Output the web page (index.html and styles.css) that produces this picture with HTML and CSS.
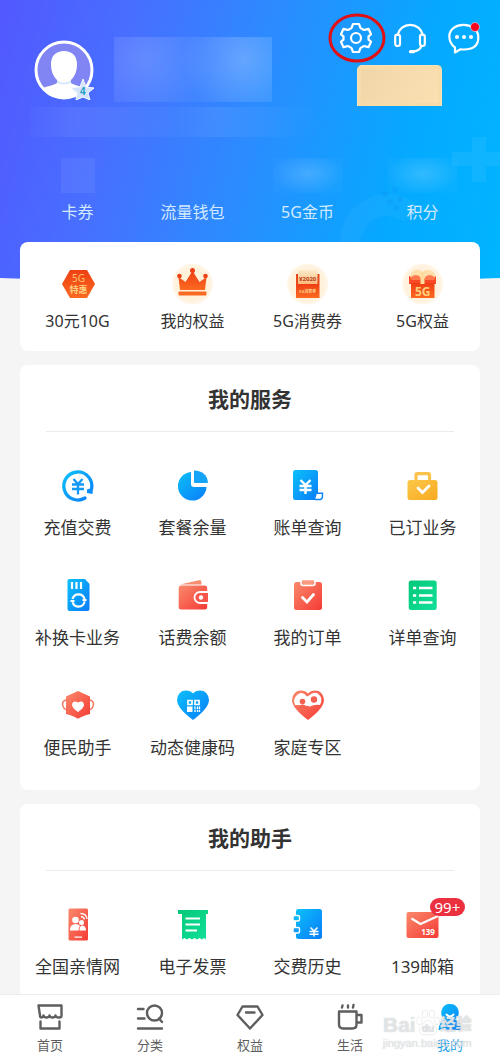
FILE: index.html
```html
<!DOCTYPE html>
<html lang="zh-CN">
<head>
<meta charset="utf-8">
<meta name="viewport" content="width=device-width, initial-scale=1">
<title>我的</title>
<link rel="stylesheet" href="styles.css">
</head>
<body>
<svg class="defs" aria-hidden="true">
  <defs>
    <linearGradient id="blue" x1="0" y1="0" x2="1" y2="1"><stop offset="0" stop-color="#0cc0fa"/><stop offset="1" stop-color="#0a7cf8"/></linearGradient>
    <linearGradient id="red" x1="0" y1="0" x2="1" y2="1"><stop offset="0" stop-color="#f98a6c"/><stop offset="1" stop-color="#f53a35"/></linearGradient>
    <linearGradient id="green" x1="0" y1="0" x2="1" y2="1"><stop offset="0" stop-color="#04c878"/><stop offset="1" stop-color="#12e09a"/></linearGradient>
    <linearGradient id="gold" x1="0" y1="0" x2="1" y2="1"><stop offset="0" stop-color="#fbc84a"/><stop offset="1" stop-color="#f9a91f"/></linearGradient>
    <linearGradient id="orange" x1="0" y1="0" x2="0" y2="1"><stop offset="0" stop-color="#ee3f14"/><stop offset="1" stop-color="#fb6a20"/></linearGradient>
    <linearGradient id="cream" x1="0" y1="0" x2="0" y2="1"><stop offset="0" stop-color="#fdeccb"/><stop offset="1" stop-color="#fbb878"/></linearGradient>
    <radialGradient id="halo"><stop offset="0.7" stop-color="#fff1da"/><stop offset="0.9" stop-color="#fff4e2"/><stop offset="1" stop-color="#fff8ec"/></radialGradient>
  </defs>
</svg>
<main class="page">
  <header class="hero">
    <svg class="hero-art" viewBox="0 0 170 110" aria-hidden="true">
      <path d="M122 20h20V5h14v15h14v14h-14v16h-14V34h-20z" fill="#fff" opacity=".06"/>
      <path d="M10 110a48 48 0 0 1 48-48q18 0 30 12l-14 16q-8-6-18-6-20 0-26 26z" fill="#fff" opacity=".04"/>
      <g fill="#0873e8" opacity=".12"><circle cx="55" cy="62" r="3"/><circle cx="65" cy="58" r="3"/><circle cx="60" cy="70" r="3"/><circle cx="70" cy="67" r="3"/><circle cx="66" cy="76" r="3"/></g>
    </svg>
    <div class="profile">
      <button class="avatar" aria-label="头像">
        <svg viewBox="0 0 60 60">
          <defs><clipPath id="face"><circle cx="30" cy="30" r="28"/></clipPath></defs>
          <circle cx="30" cy="30" r="28" fill="#8085f3"/>
          <g clip-path="url(#face)" fill="#fff"><path d="M17 24c0-8 5-13 13-13s13 5 13 13c0 7-2 12-6 16v3c4 3 12 3 18 7v12H5V50c6-4 14-4 18-7v-3c-4-4-6-9-6-16z"/></g>
          <path d="M23 40q7 5 14 0v3q-7 3-14 0z" fill="#dce9fb"/>
          <circle cx="30" cy="30" r="28" fill="none" stroke="#fff" stroke-width="3"/>
          <path d="M49 39l3 8 8 1-6 5 2 7-7-3-7 3 1-7-6-5 9-1z" fill="#d5e4fa" stroke="#f3f9ff"/>
          <text x="46" y="55" font-size="10" font-weight="700" fill="#179ec5">4</text>
        </svg>
      </button>
      <div class="name-mask"></div>
      <div class="tools">
        <div class="toolbar">
          <button class="tool" aria-label="设置">
            <svg viewBox="0 0 32 32" fill="none" stroke="#fff" stroke-width="2.2" stroke-linejoin="round"><path d="M13 2h6l1.300 3.500q.4 1 1.500 1.300l1.700.9q1 .5 2-.1l3-.8 2.500 5.500-2.500 2v3.400l2.500 2-2.500 5.500-3-.8q-1-.6-2-.1l-1.700.9q-1.100.3-1.500 1.300L19 30h-6l-1.300-3.500q-.4-1-1.500-1.300l-1.700-.9q-1-.5-2 .1l-3 .8L1 19.700l2.500-2v-3.400l-2.500-2 2.500-5.500 3 .8q1 .6 2 .1l1.700-.9q1.100-.3 1.500-1.300z"/><circle cx="16" cy="16" r="5"/></svg>
            <svg class="ring" viewBox="0 0 58 50"><ellipse cx="29" cy="25" rx="27" ry="23" fill="none" stroke="#df1016" stroke-width="3"/></svg>
          </button>
          <button class="tool" aria-label="客服">
            <svg viewBox="0 0 32 32" fill="none" stroke="#fff" stroke-width="2.2" stroke-linecap="round"><path d="M3.500 13a13 13 0 0 1 25.400 0"/><rect x="1.200" y="12.500" width="4.800" height="11.500" rx="2.200"/><rect x="26" y="12.500" width="4.800" height="11.500" rx="2.200"/><path d="M27.500 24q-2 5-8 5.500"/><path d="M16.500 29.700h3" stroke-width="3.200"/></svg>
          </button>
          <button class="tool" aria-label="消息">
            <svg viewBox="0 0 32 32"><path d="M7 25.500v5l5.500-3.200Q31 29 30.300 14.500C29.500 -1 1.300-.8 1.300 14.500Q1.500 21.500 7 25.500z" fill="none" stroke="#fff" stroke-width="2.200" stroke-linejoin="round"/><g fill="#fff"><circle cx="9" cy="15" r="2"/><circle cx="16" cy="15" r="2"/><circle cx="23" cy="15" r="2"/></g><circle cx="27" cy="5" r="4.500" fill="#fa0620" stroke="#d7efff" stroke-width=".6"/></svg>
          </button>
        </div>
        <div class="gold-card"></div>
      </div>
    </div>
    <div class="info-mask"></div>
    <div class="stats">
      <a href="#"><i class="patch small"></i>卡券</a>
      <a href="#"><i class="patch none"></i>流量钱包</a>
      <a href="#"><i class="patch"></i>5G金币</a>
      <a href="#"><i class="patch"></i>积分</a>
    </div>
  </header>

  <nav class="card quick">
    <a href="#"><svg viewBox="0 0 42 42"><path d="M13 7h17l8 14-8 14H13L5 21z" fill="url(#orange)"/><text x="21.500" y="19" text-anchor="middle" font-size="10" fill="#ffc36c">5G</text><text x="21.500" y="30" text-anchor="middle" font-size="9" font-weight="700" fill="#ffce80">特惠</text></svg>30元10G</a>
    <a href="#"><svg viewBox="0 0 42 42"><circle cx="20.500" cy="21" r="20.500" fill="url(#halo)"/><path d="M8 27L6.500 14l7 5L20.500 8l7 11 7-5L33 27z" fill="url(#orange)"/><g fill="#ee4016"><circle cx="7.500" cy="13" r="2.300"/><circle cx="20.500" cy="7.500" r="2.500"/><circle cx="33.500" cy="13" r="2.300"/></g><rect x="6.500" y="28.500" width="28" height="4" rx="1" fill="#fb6a25"/></svg>我的权益</a>
    <a href="#"><svg viewBox="0 0 42 42"><circle cx="20.500" cy="21" r="20.500" fill="url(#halo)"/><path d="M9 11h23.500v10H9z" fill="#e5481a"/><path d="M11 7h19.500v14H11z" fill="url(#cream)"/><path d="M9 21h23.500v14H9z" fill="url(#orange)"/><text x="20.700" y="18" text-anchor="middle" font-size="6" font-weight="700" fill="#b83d18">¥2020</text><text x="20.700" y="29.500" text-anchor="middle" font-size="4" font-weight="700" fill="#ffd18b">5G消费券</text></svg>5G消费券</a>
    <a href="#"><svg viewBox="0 0 42 42"><circle cx="20.500" cy="21" r="20.500" fill="url(#halo)"/><path d="M7 13h27v8H7z" fill="#fb4a28"/><path d="M9 20h23.500v15H9z" fill="url(#orange)"/><path d="M8 14q0-5 5-7 5-1 7.500 2Q23 6 28 7q5 2 5.500 7l-5 3-8-2-8 2z" fill="#ffe0ac"/><path d="M9 14q5-4 9.500 0v3H9zM23 14q4.500-4 9.500 0v3H23z" fill="#ff7a4c"/><path d="M18.500 9h4v12h-4z" fill="#ffdc9e"/><text x="20.700" y="32.500" text-anchor="middle" font-size="12" font-weight="700" fill="#ffcf7e">5G</text></svg>5G权益</a>
  </nav>

  <section class="card">
    <h2>我的服务</h2>
    <div class="grid">
      <a href="#"><svg viewBox="0 0 36 36"><path d="M25 30A14 14 0 1 1 31.500 21" fill="none" stroke="url(#blue)" stroke-width="3.300" stroke-linecap="round"/><path d="M27 21.500l6-2-.5 6.500-5.500-1z" fill="#0a8df9"/><path d="M13.500 11l4.500 5 4.500-5M12 16.500h12M12 21h12M18 16v10.500" fill="none" stroke="#1599f8" stroke-width="2.300"/></svg>充值交费</a>
      <a href="#"><svg viewBox="0 0 36 36"><path d="M16 4v12q0 3 3 3h12.500A14.300 14.300 0 1 1 16 4z" fill="url(#blue)"/><path d="M19 2.500Q32 3 33 15H20q-1 0-1-1z" fill="#16a4f8"/></svg>套餐余量</a>
      <a href="#"><svg viewBox="0 0 36 36"><rect x="3" y="2" width="25" height="30" rx="2.500" fill="url(#blue)"/><path d="M27 25.300h5.500v3.200a3 3 0 0 1-3 3H25" fill="#fff" stroke="#0a82f8" stroke-width="1.400"/><path d="M10.500 12l5 5 5-5M9.500 18h12M9.500 22h12M15.500 17v9" fill="none" stroke="#fff" stroke-width="2.400"/></svg>账单查询</a>
      <a href="#"><svg viewBox="0 0 36 36"><path d="M11 12V7q0-1.300 1.300-1.300h11Q24.500 5.700 24.500 7v5" fill="none" stroke="#fbc34e" stroke-width="3.200"/><rect x="2.500" y="12" width="30" height="20" rx="2.500" fill="url(#gold)"/><path d="M13 20l4.500 4.500L24 18" fill="none" stroke="#fff" stroke-width="2.800" stroke-linecap="round"/></svg>已订业务</a>
      <a href="#"><svg viewBox="0 0 36 36"><path d="M9.500 1H25l4.500 5v25a2 2 0 0 1-2 2h-18a2 2 0 0 1-2-2V3a2 2 0 0 1 2-2z" fill="url(#blue)"/><path d="M12 4v7M16.500 4v7M21 4v7" stroke="#fff" stroke-width="2.200"/><g fill="none" stroke="#fff" stroke-width="2.200"><circle cx="18.500" cy="22.500" r="6.200" stroke-dasharray="16 3.500" stroke-dashoffset="-1"/><path d="M10.500 23h4M22.500 22h4"/></g></svg>补换卡业务</a>
      <a href="#"><svg viewBox="0 0 36 36"><path d="M5 6.500L25 2q1.500 0 1.500 4.500z" fill="#f88d72"/><rect x="3.700" y="7.500" width="28.500" height="24" rx="2.500" fill="url(#red)"/><path d="M33 14h-8a5.500 5.500 0 0 0 0 11h8" fill="#f6564b" stroke="#fff" stroke-width="1.800"/><circle cx="26" cy="19.500" r="2.200" fill="#fff"/></svg>话费余额</a>
      <a href="#"><svg viewBox="0 0 36 36"><rect x="4" y="4" width="28" height="28" rx="2.500" fill="url(#red)"/><rect x="11" y="1.500" width="14" height="6" rx="2" fill="#fb9a80" stroke="#fff" stroke-width="1.500"/><path d="M12.500 19.500l4.500 4.500 6.500-7.500" fill="none" stroke="#fff" stroke-width="2.800" stroke-linecap="round"/></svg>我的订单</a>
      <a href="#"><svg viewBox="0 0 36 36"><rect x="3.700" y="2.500" width="28" height="29.500" rx="2.500" fill="url(#green)"/><path d="M8 10h3.200M14 10h13.500M8 17.500h3.200M14 17.500h13.500M8 24.500h3.200M14 24.500h13.500" stroke="#fff" stroke-width="2.600"/></svg>详单查询</a>
      <a href="#"><svg viewBox="0 0 36 36"><path d="M7 12q-4 0-4.500 4Q3 21 7 22M29 12q4 0 4.500 4Q33 21 29 22" fill="none" stroke="#f47862" stroke-width="1.500"/><path d="M18 3q2.500 1 12 5.500v17.500Q22 28 18 30.700 14 28 6 26V8.500Q15.500 4 18 3z" fill="url(#red)"/><path d="M18 24q-6-4-6-7.500 1-5 6-2 5-3 6 2 0 3.500-6 7.500z" fill="#fff"/></svg>便民助手</a>
      <a href="#"><svg viewBox="0 0 36 36"><path d="M18 32Q2 20 2 12 3 2.500 11 2.500q4.500 0 7 3 2.500-3 7-3 8 0 9 9.500 0 8-16 20z" fill="url(#blue)"/><path d="M13 12.500h4v4h-4zM20 12.500h4v4h-4z" fill="none" stroke="#fff" stroke-width="1.700"/><path d="M12 18.500h5.500V24H12z" fill="#fff"/><path d="M20 18.500V24M22.500 18.500V24M24.500 18.500V24" stroke="#fff" stroke-width="1.300" stroke-dasharray="2.500 .8"/></svg>动态健康码</a>
      <a href="#"><svg viewBox="0 0 36 36"><path d="M18 32Q2 20 2 12 3 2.500 11 2.500q4.500 0 7 3 2.500-3 7-3 8 0 9 9.500 0 8-16 20z" fill="url(#red)"/><path d="M5 17Q2.500 11 7 7q5-4.500 10 1.500l2-1q5-4.500 9.500-1.500 5 5 1.500 11-3-1-9 1-1.500 1-2.500 0Q12 17 5 17z" fill="#fff"/><g fill="#f4604f"><circle cx="12.500" cy="13.500" r="2.800"/><circle cx="24" cy="11.500" r="3.200"/><path d="M8.500 20q1-3.500 4-3.500t4 3.500z"/></g></svg>家庭专区</a>
    </div>
  </section>

  <section class="card last">
    <h2>我的助手</h2>
    <div class="grid">
      <a href="#"><svg viewBox="0 0 36 36"><rect x="8.500" y="1.500" width="19.500" height="32" rx="1.500" fill="url(#red)"/><g fill="#fff"><circle cx="15.500" cy="13" r="3.300"/><path d="M10 23.500q0-6.500 5.500-6.500 3 0 4.500 2-1.500 1.500-1.500 4.500z"/><circle cx="21.500" cy="15.500" r="2.500"/><path d="M19.500 23.500q0-5 3-5 3.500.5 3.500 5zM14.500 29.500h7.500v1.200h-7.500z"/></g><path d="M21 9.500q3 .5 3.500 3M20.500 6.500q6 0 6.500 5.500" fill="none" stroke="#fff" stroke-width="1.300"/></svg>全国亲情网</a>
      <a href="#"><svg viewBox="0 0 36 36"><path d="M3 3h30v4h-2v25.500l-2-1.500-2 1.500-2.500-1.500-2.500 1.500-2.500-1.500-2.500 1.500-2.500-1.500-2.500 1.500-2.500-1.500-2.500 1.500V7H3z" fill="url(#green)"/><path d="M10.500 11.500h14.500M10.500 17.500h14.500M10.500 23.500h11.500" stroke="#fff" stroke-width="2.200"/></svg>电子发票</a>
      <a href="#"><svg viewBox="0 0 36 36"><rect x="6" y="2" width="26" height="30" rx="2.500" fill="url(#blue)"/><rect x="3" y="8.500" width="6.500" height="5.500" rx="1.500" fill="#14b7f9" stroke="#fff" stroke-width="1.400"/><rect x="3" y="20.500" width="6.500" height="5.500" rx="1.500" fill="#149df9" stroke="#fff" stroke-width="1.400"/><path d="M20.500 20.500l3.500 3.500 3.500-3.500M19.500 24.500h9M19.500 27.200h9M24 24v5.500" fill="none" stroke="#fff" stroke-width="1.500"/></svg>交费历史</a>
      <a href="#"><svg viewBox="0 0 36 36"><rect x="1.500" y="5" width="32" height="26" rx="2" fill="url(#red)"/><path d="M6.500 11.500l9 5.500L33 9" fill="none" stroke="#fff" stroke-width="2.200"/><text x="23" y="27.500" text-anchor="middle" font-size="8" font-weight="700" fill="#fff">139</text></svg><span class="badge">99+</span>139邮箱</a>
    </div>
  </section>
</main>

<nav class="tabs">
  <a href="#"><svg viewBox="0 0 28 28"><path d="M2.500 2.500h23v10q0 2-2 2h-1.500q-2 0-2.500-2-.5 2-2.500 2h-1q-2 0-2.500-2-.5 2-2.500 2h-1q-2 0-2.500-2-.5 2-2 2q-1.500 0-1.500-2zM4.500 18.500v7h19v-7"/></svg>首页</a>
  <a href="#"><svg viewBox="0 0 28 28"><path d="M2 6h5.500M2 15.500h6.500M2 25.500h24"/><circle cx="18.500" cy="10" r="7.500"/><path d="M23 15.500l3 3.500"/></svg>分类</a>
  <a href="#"><svg viewBox="0 0 28 28"><path d="M6.500 3.500h15L26.500 12 14 25.500 1.500 12zM10 9.500h8.500"/></svg>权益</a>
  <a href="#"><svg viewBox="0 0 28 28"><path d="M3 8.500h17.500v13q0 4-4 4H7q-4 0-4-4zM21 12h4.500v7.500H21M6.500 2.500l-.5 2M12 2.500v2M17.500 2l-.5 2.500"/></svg>生活</a>
  <a href="#" class="active" aria-current="page"><svg viewBox="0 0 28 28"><path d="M14 1a8.500 8.500 0 0 1 5 15.500q6 2 6.500 10.500h-23q.5-8.500 6.500-10.500A8.500 8.500 0 0 1 14 1z" fill="url(#blue)" stroke="none"/><path d="M10.500 11.500q3.500 4 7 0" stroke="#fff" stroke-width="2"/></svg>我的</a>
  <div class="mark" aria-hidden="true">
    <div class="mark-name">Bai<svg viewBox="0 0 24 28"><g fill="#fff" stroke="#e0e2e4" stroke-width=".8"><ellipse cx="3.500" cy="12" rx="2.800" ry="3.800"/><ellipse cx="9" cy="5" rx="2.800" ry="4"/><ellipse cx="16" cy="5" rx="2.800" ry="4"/><ellipse cx="21" cy="12" rx="2.500" ry="3.800"/><path d="M12 11q3 0 5.500 5 4.500 3 3 7-2 4-8.500 2.500Q5 27 3.500 23q-1-4 3-7 2.500-5 5.500-5z"/></g><text x="12" y="23" text-anchor="middle" font-size="10" font-weight="700" fill="#d8dbde">du</text></svg><b>经验</b></div>
    <div class="mark-url">jingyan.baidu.com</div>
  </div>
</nav>
</body>
</html>
```
FILE: styles.css
```css
* { box-sizing: border-box; }

body {
  margin: 0;
  min-height: 100vh;
  display: flex;
  flex-direction: column;
  background: #f5f5f6;
  color: #333;
  font-family: "Noto Sans", "Noto Sans CJK SC", sans-serif;
  font-size: 17px;
  line-height: 24px;
}

a { color: inherit; text-decoration: none; }
svg { display: block; flex: none; }
button { padding: 0; border: 0; background: none; position: relative; }
.defs { position: absolute; width: 0; height: 0; }

.page {
  flex: 1;
  display: flex;
  flex-direction: column;
  position: relative;
  z-index: 0;
}

.page::before {
  content: "";
  position: absolute;
  z-index: -1;
  inset: 0 0 auto;
  height: 282px;
  background: linear-gradient(104deg, #5258ff 0%, #4770ff 25%, #2b8cff 50%, #05a9ff 78%, #00b5ff 100%);
  clip-path: ellipse(300% 100% at 50% 0);
}

.hero { position: relative; padding-bottom: 18px; }

.hero-art {
  position: absolute;
  z-index: -1;
  right: 0;
  bottom: 0;
  width: 170px;
  height: 110px;
}

.profile {
  display: flex;
  padding: 22px 20px 0 34px;
}

.avatar { width: 60px; height: 60px; margin-top: 18px; }

.name-mask {
  width: 158px;
  height: 65px;
  margin: 15px 0 0 20px;
  background:
    radial-gradient(circle at 20% 35%, #ffffff22, #fff0 45%),
    radial-gradient(circle at 82% 35%, #ffffff38, #fff0 45%),
    #ffffff0c;
}

.tools { margin-left: auto; }
.toolbar { display: flex; gap: 22px; }
.tool { width: 32px; height: 32px; }
.ring { position: absolute; width: 58px; height: 50px; top: -9px; left: -12px; }

.gold-card {
  width: 85px;
  height: 41px;
  margin: 11px 0 0 17px;
  border: 1px solid #f8e3b8;
  border-bottom: 0;
  border-radius: 5px 5px 0 0;
  background: linear-gradient(120deg, #efd6a8, #fbe0b2);
  box-shadow: inset 0 0 0 3px #f7dba9;
}

.info-mask {
  width: 290px;
  height: 30px;
  margin: 1px 0 0 30px;
  background: linear-gradient(90deg, #ffffff04, #ffffff10 15%, #ffffff08 50%, #ffffff12 65%, #fff0);
}

.stats, .quick, .grid {
  display: grid;
  grid-template-columns: repeat(4, 1fr);
}

.stats {
  margin: 21px 20px 0;
  color: #d2eaff;
  font-size: 16px;
}

.stats a, .quick a, .grid a {
  display: flex;
  flex-direction: column;
  align-items: center;
  white-space: nowrap;
}

.patch {
  width: 70px;
  height: 35px;
  margin-bottom: 7px;
  background: radial-gradient(ellipse at 50% 45%, #ffffff2e, #ffffff05 75%);
}

.patch.small { width: 34px; background: #ffffff10; }
.patch.none { background: none; }

.card {
  margin: 0 20px 14px;
  border-radius: 8px;
  background: #fff;
}

.quick { padding: 21px 0 18px; font-size: 16px; }
.quick a { gap: 4px; }
.quick svg { width: 42px; height: 42px; }

.card h2 {
  margin: 0 26px;
  padding: 18px 0 16px;
  border-bottom: 1px solid #ebebeb;
  font-size: 21px;
  font-weight: 700;
  line-height: 32px;
  text-align: center;
}

.grid { padding: 36px 0 30px; row-gap: 38px; }
.grid a { position: relative; gap: 12px; }
.grid svg { width: 36px; height: 36px; }

.last { margin-bottom: 0; border-radius: 8px 8px 0 0; }
.last .grid { padding-bottom: 15px; }

.badge {
  position: absolute;
  top: -9px;
  left: calc(50% + 7px);
  padding: 0 5px;
  border-radius: 9px;
  background: #eb3040;
  color: #fff;
  font-size: 15px;
  line-height: 18px;
}

.tabs {
  position: sticky;
  bottom: 0;
  display: grid;
  grid-template-columns: repeat(5, 1fr);
  padding: 8px 0 6px;
  border-top: 1px solid #ececec;
  background: #fff;
  color: #5e5e5e;
  font-size: 13px;
  line-height: 16px;
}

.tabs a {
  display: flex;
  flex-direction: column;
  align-items: center;
  gap: 6px;
}

.tabs a svg {
  width: 28px;
  height: 28px;
  fill: none;
  stroke: #5e5e5e;
  stroke-width: 2.4;
  stroke-linecap: round;
  stroke-linejoin: round;
}

.tabs .active { color: #18a0e6; }

.mark {
  position: absolute;
  right: 27px;
  bottom: 10px;
  width: 90px;
  color: #fff9;
  text-shadow: 0 0 1px #b4babe;
  pointer-events: none;
}

.mark-name {
  display: flex;
  align-items: flex-end;
  font: 700 21px/24px "Liberation Sans", "Noto Sans CJK SC", sans-serif;
}

.mark-name svg { width: 24px; height: 28px; opacity: .75; }
.mark-name b { font-size: 16px; }
.mark-url { font: 11px/12px "Liberation Sans", sans-serif; }
```
